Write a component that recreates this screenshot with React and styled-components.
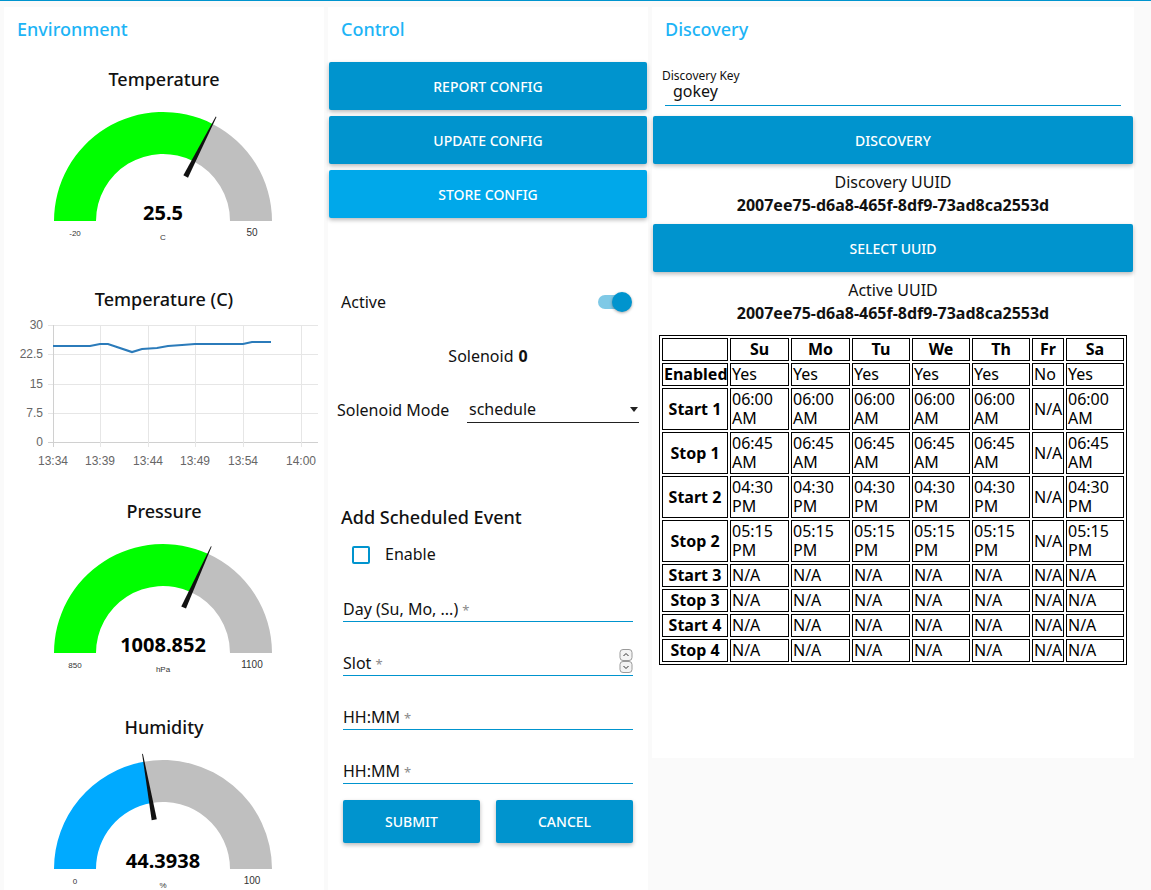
import React from "react";
import styled, { createGlobalStyle } from "styled-components";

const GlobalStyle = createGlobalStyle`
  html, body { margin: 0; padding: 0; background: #fafafa; }
  body { font-family: "Noto Sans", "Open Sans", sans-serif; color: #111; font-size: 16px; }
  * { box-sizing: border-box; }
`;

const Page = styled.div`
  height: 890px;
  overflow: hidden;
  border-top: 1px solid #0094ce;
  display: flex;
  align-items: flex-start;
  gap: 4px;
  padding: 6px 4px 0;
`;

const Card = styled.div`
  width: ${(p) => p.$w}px;
  height: ${(p) => p.$h}px;
  flex-shrink: 0;
  background: #fff;
`;

const GroupTitle = styled.div`
  height: 55px;
  padding: 10px 13px 0;
  font-size: 18px;
  line-height: 24px;
  font-weight: 500;
  color: #1db4f6;
`;

const Widget = styled.div`
  height: ${(p) => p.$h || 48}px;
  margin-bottom: 6px;
`;

const WidgetTitle = styled.div`
  height: ${(p) => p.$h || 29}px;
  padding-top: ${(p) => p.$top || 5}px;
  text-align: center;
  font-size: 18px;
  line-height: 24px;
  font-weight: 500;
  color: #111;
`;

const ValueText = styled.text`
  font-family: "Noto Sans", sans-serif;
  font-size: 20px;
  font-weight: 700;
  fill: #010101;
  text-anchor: middle;
`;

const ScaleText = styled.text`
  font-family: "Liberation Sans", Arial, sans-serif;
  font-size: ${(p) => p.$size || 8}px;
  fill: #333;
  text-anchor: middle;
`;

const AxisText = styled.text`
  font-family: "Liberation Sans", Arial, sans-serif;
  font-size: 12px;
  fill: #666;
  text-anchor: ${(p) => p.$anchor || "middle"};
`;

const pt = (cx, cy, r, a) => {
  const t = (a * Math.PI) / 180;
  return [cx + r * Math.cos(t), cy - r * Math.sin(t)];
};

const sector = (cx, cy, r0, r1, a0, a1) => {
  const f = ([x, y]) => `${x.toFixed(2)} ${y.toFixed(2)}`;
  return `M ${f(pt(cx, cy, r1, a0))} A ${r1} ${r1} 0 0 1 ${f(pt(cx, cy, r1, a1))} L ${f(
    pt(cx, cy, r0, a1)
  )} A ${r0} ${r0} 0 0 0 ${f(pt(cx, cy, r0, a0))} Z`;
};

const needle = (cx, cy, a) => {
  const t = (a * Math.PI) / 180;
  const dx = Math.cos(t);
  const dy = -Math.sin(t);
  const nx = -dy;
  const ny = dx;
  const [bx, by] = [cx + dx * 50, cy + dy * 50];
  const [tx, ty] = [cx + dx * 117, cy + dy * 117];
  return [
    [bx + nx * 2.6, by + ny * 2.6],
    [tx + nx * 0.4, ty + ny * 0.4],
    [tx - nx * 0.4, ty - ny * 0.4],
    [bx - nx * 2.6, by - ny * 2.6],
  ]
    .map(([x, y]) => `${x.toFixed(2)},${y.toFixed(2)}`)
    .join(" ");
};

const Gauge = ({ title, value, text, min, max, units, color }) => {
  const cx = 159;
  const cy = 130;
  const ang = 180 - (180 * (value - min)) / (max - min);
  return (
    <Widget $h={210}>
      <WidgetTitle>{title}</WidgetTitle>
      <svg width="320" height="181">
        <path d={sector(cx, cy, 67, 109, 180, ang)} fill={color} />
        <path d={sector(cx, cy, 67, 109, ang, 0)} fill="#bfbfbf" />
        <polygon points={needle(cx, cy, ang)} fill="#111" />
        <ValueText x={cx} y={129}>
          {text}
        </ValueText>
        <ScaleText x={71} y={145}>
          {min}
        </ScaleText>
        <ScaleText x={cx} y={149}>
          {units}
        </ScaleText>
        <ScaleText x={248} y={145} $size={10}>
          {max}
        </ScaleText>
      </svg>
    </Widget>
  );
};

const gridX = [49, 96, 144, 191, 239, 297];
const timeLabels = ["13:34", "13:39", "13:44", "13:49", "13:54", "14:00"];
const gridY = [
  [14, "30"],
  [43, "22.5"],
  [73, "15"],
  [102, "7.5"],
  [131, "0"],
];
const series = [
  [49, 35], [86, 35], [96, 33], [104, 33], [128, 41], [138, 38], [153, 37],
  [164, 35], [178, 34], [191, 33], [239, 33], [248, 31], [267, 31],
];

const TempChart = () => (
  <Widget $h={210}>
    <WidgetTitle $h={33} $top={9}>
      Temperature (C)
    </WidgetTitle>
    <svg width="320" height="177">
      {gridY.map(([y, l]) => (
        <g key={l}>
          <line x1={44} x2={314} y1={y + 0.5} y2={y + 0.5} stroke={l === "0" ? "#d0d0d0" : "#e6e6e6"} />
          <AxisText x={39} y={y + 4} $anchor="end">
            {l}
          </AxisText>
        </g>
      ))}
      {gridX.map((x, i) => (
        <g key={x}>
          <line x1={x + 0.5} x2={x + 0.5} y1={14} y2={136} stroke={i === 0 ? "#d0d0d0" : "#e6e6e6"} />
          <AxisText x={x} y={154}>
            {timeLabels[i]}
          </AxisText>
        </g>
      ))}
      <polyline
        points={series.map((p) => p.join(",")).join(" ")}
        fill="none"
        stroke="#2b7bba"
        strokeWidth="2.2"
      />
    </svg>
  </Widget>
);

const ButtonCell = styled.div`
  height: 48px;
  margin-bottom: 6px;
  padding: 0 1px;
`;

const Button = styled.button`
  width: 100%;
  height: ${(p) => p.$h || 48}px;
  border: none;
  border-radius: 2px;
  background: ${(p) => (p.$light ? "#00a8ea" : "#0094ce")};
  color: #fff;
  font-family: "Noto Sans", sans-serif;
  font-size: 14px;
  font-weight: 500;
  text-transform: uppercase;
  box-shadow: 0 2px 4px rgba(0, 0, 0, 0.28);
  cursor: pointer;
`;

const ActiveRow = styled.div`
  height: 48px;
  margin-bottom: 6px;
  display: flex;
  align-items: center;
  justify-content: space-between;
  padding: 0 17px 0 13px;
`;

const Track = styled.div`
  width: 33px;
  height: 14px;
  border-radius: 7px;
  background: #7fc9e6;
  display: flex;
  align-items: center;
  justify-content: flex-end;
`;

const Thumb = styled.div`
  width: 20px;
  height: 20px;
  flex-shrink: 0;
  margin-right: -1px;
  border-radius: 50%;
  background: #0094ce;
  box-shadow: 0 1px 3px rgba(0, 0, 0, 0.35);
`;

const CenterText = styled.div`
  height: 48px;
  margin-bottom: 6px;
  display: flex;
  align-items: center;
  justify-content: center;
  b { margin-left: 5px; }
`;

const ModeRow = styled.div`
  height: 48px;
  margin-bottom: 6px;
  display: flex;
  align-items: center;
  padding-left: 9px;
`;

const ModeLabel = styled.div`
  width: 130px;
`;

const SelectBox = styled.div`
  width: 172px;
  height: 25px;
  border-bottom: 1px solid rgba(0, 0, 0, 0.87);
  display: flex;
  align-items: center;
  justify-content: space-between;
  padding: 0 1px 1px 2px;
`;

const Caret = styled.span`
  width: 0;
  height: 0;
  border-left: 4px solid transparent;
  border-right: 4px solid transparent;
  border-top: 5px solid #222;
`;

const FormTitle = styled.div`
  height: 46px;
  padding: 11px 13px 0;
  font-size: 18px;
  line-height: 24px;
  font-weight: 500;
`;

const CheckRow = styled.div`
  height: 28px;
  display: flex;
  align-items: center;
  gap: 15px;
  padding-left: 24px;
  line-height: 20px;
`;

const CheckBox = styled.span`
  width: 18px;
  height: 18px;
  margin-top: 2px;
  border: 2px solid #0094ce;
  border-radius: 2px;
`;

const Field = styled.div`
  height: 54px;
  margin: 0 15px;
  border-bottom: 1px solid #0094ce;
  display: flex;
  align-items: flex-end;
  justify-content: space-between;
  padding-bottom: 1px;
  line-height: 20px;
  span { color: #8a8a8a; font-size: 13px; margin-left: 4px; }
  svg { margin-bottom: 1px; }
`;

const Spinner = () => (
  <svg width="14" height="24" viewBox="0 0 14 24">
    <rect x="1" y="0.5" width="12" height="11" rx="3" fill="#f4f4f4" stroke="#9a9a9a" />
    <rect x="1" y="12.5" width="12" height="11" rx="3" fill="#f4f4f4" stroke="#9a9a9a" />
    <path d="M4.5 7 L7 4.5 L9.5 7" fill="none" stroke="#333" />
    <path d="M4.5 17 L7 19.5 L9.5 17" fill="none" stroke="#333" />
  </svg>
);

const FormButtons = styled.div`
  display: flex;
  gap: 16px;
  margin: 16px 15px 0;
`;

const KeyWidget = styled.div`
  height: 48px;
  margin-bottom: 6px;
  padding: 8px 13px 0 10px;
`;

const KeyLabel = styled.div`
  font-size: 12px;
  line-height: 12px;
`;

const KeyInput = styled.div`
  height: 24px;
  margin-left: 3px;
  padding: 3px 0 0 8px;
  line-height: 13px;
  border-bottom: 1px solid #0094ce;
`;

const InfoBlock = styled.div`
  height: 48px;
  margin-bottom: 6px;
  padding-top: 1px;
  text-align: center;
  line-height: 23px;
  b { display: block; }
`;

const Schedule = styled.table`
  margin: 9px 7px 0;
  width: 468px;
  table-layout: fixed;
  border: 1px solid #000;
  border-spacing: 2px;
  font-size: 16px;
  line-height: 19px;
  color: #000;
  th, td {
    border: 1px solid #000;
    padding: 1px;
    overflow: visible;
  }
  th { font-weight: 700; text-align: center; white-space: nowrap; }
  td { text-align: left; }
  td.narrow { white-space: nowrap; }
`;

const colWidths = [66, 59, 59, 58, 58, 58, 32, 58];
const days = ["Su", "Mo", "Tu", "We", "Th", "Fr", "Sa"];
const rows = [
  ["Enabled", ["Yes", "Yes", "Yes", "Yes", "Yes", "No", "Yes"]],
  ["Start 1", "06:00 AM"],
  ["Stop 1", "06:45 AM"],
  ["Start 2", "04:30 PM"],
  ["Stop 2", "05:15 PM"],
  ["Start 3", null],
  ["Stop 3", null],
  ["Start 4", null],
  ["Stop 4", null],
];

const cellsFor = (v) =>
  Array.isArray(v) ? v : days.map((d) => (v && d !== "Fr" ? v : "N/A"));

export default function App() {
  return (
    <>
      <GlobalStyle />
      <Page>
        <Card $w={320} $h={1000}>
          <GroupTitle>Environment</GroupTitle>
          <Gauge title="Temperature" value={25.5} text="25.5" min={-20} max={50} units="C" color="#00ff00" />
          <TempChart />
          <Gauge title="Pressure" value={1008.852} text="1008.852" min={850} max={1100} units="hPa" color="#00ff00" />
          <Gauge title="Humidity" value={44.3938} text="44.3938" min={0} max={100} units="%" color="#00aaff" />
        </Card>

        <Card $w={320} $h={1000}>
          <GroupTitle>Control</GroupTitle>
          <ButtonCell>
            <Button>Report Config</Button>
          </ButtonCell>
          <ButtonCell>
            <Button>Update Config</Button>
          </ButtonCell>
          <ButtonCell>
            <Button $light>Store Config</Button>
          </ButtonCell>
          <Widget />
          <ActiveRow>
            <span>Active</span>
            <Track>
              <Thumb />
            </Track>
          </ActiveRow>
          <CenterText>
            Solenoid<b>0</b>
          </CenterText>
          <ModeRow>
            <ModeLabel>Solenoid Mode</ModeLabel>
            <SelectBox>
              schedule
              <Caret />
            </SelectBox>
          </ModeRow>
          <Widget />
          <FormTitle>Add Scheduled Event</FormTitle>
          <CheckRow>
            <CheckBox />
            Enable
          </CheckRow>
          <Field>
            <div>
              Day (Su, Mo, ...)<span>*</span>
            </div>
          </Field>
          <Field>
            <div>
              Slot<span>*</span>
            </div>
            <Spinner />
          </Field>
          <Field>
            <div>
              HH:MM<span>*</span>
            </div>
          </Field>
          <Field>
            <div>
              HH:MM<span>*</span>
            </div>
          </Field>
          <FormButtons>
            <Button $h={43}>Submit</Button>
            <Button $h={43}>Cancel</Button>
          </FormButtons>
        </Card>

        <Card $w={482} $h={751}>
          <GroupTitle>Discovery</GroupTitle>
          <KeyWidget>
            <KeyLabel>Discovery Key</KeyLabel>
            <KeyInput>gokey</KeyInput>
          </KeyWidget>
          <ButtonCell>
            <Button>Discovery</Button>
          </ButtonCell>
          <InfoBlock>
            Discovery UUID
            <b>2007ee75-d6a8-465f-8df9-73ad8ca2553d</b>
          </InfoBlock>
          <ButtonCell>
            <Button>Select UUID</Button>
          </ButtonCell>
          <InfoBlock>
            Active UUID
            <b>2007ee75-d6a8-465f-8df9-73ad8ca2553d</b>
          </InfoBlock>
          <Schedule>
            <colgroup>
              {colWidths.map((w, i) => (
                <col key={i} style={{ width: w }} />
              ))}
            </colgroup>
            <thead>
              <tr>
                <th />
                {days.map((d) => (
                  <th key={d}>{d}</th>
                ))}
              </tr>
            </thead>
            <tbody>
              {rows.map(([label, v]) => (
                <tr key={label}>
                  <th>{label}</th>
                  {cellsFor(v).map((c, i) => (
                    <td key={i} className={days[i] === "Fr" ? "narrow" : undefined}>
                      {c}
                    </td>
                  ))}
                </tr>
              ))}
            </tbody>
          </Schedule>
        </Card>
      </Page>
    </>
  );
}
